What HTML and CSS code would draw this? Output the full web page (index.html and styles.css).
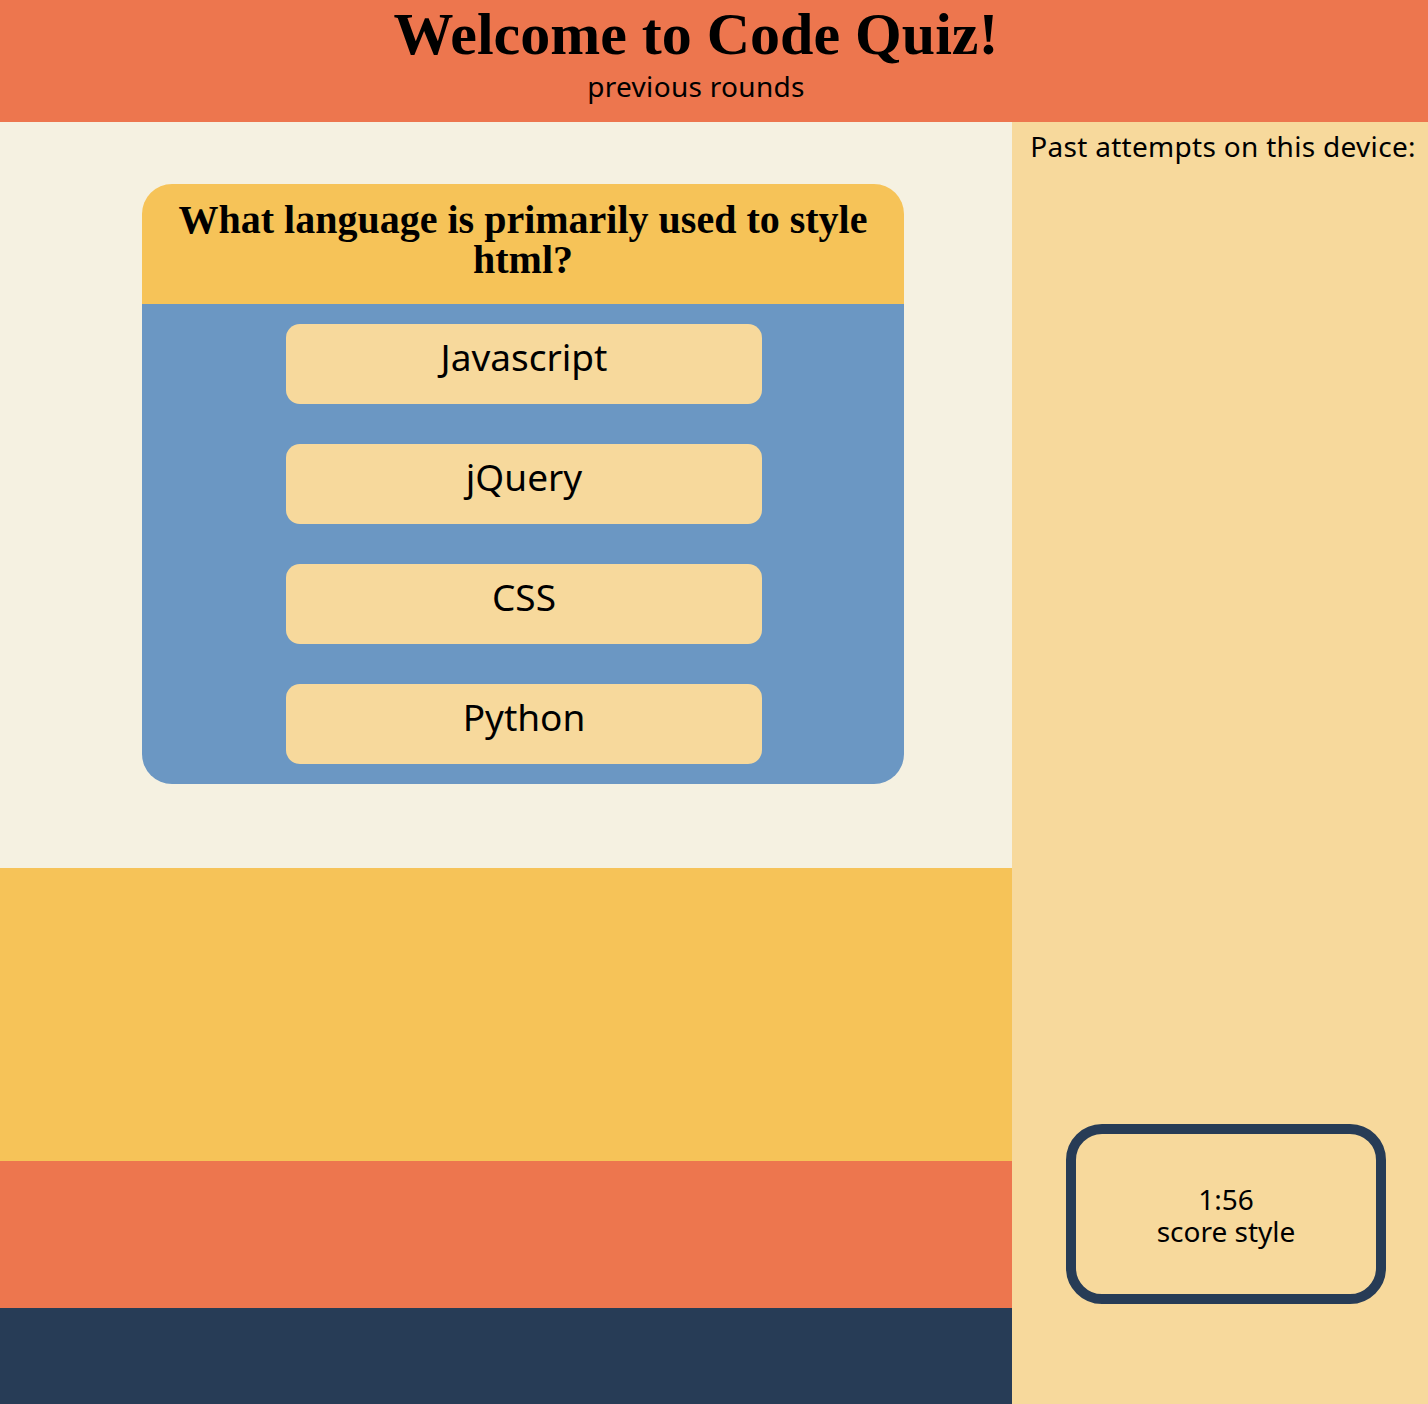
FILE: index.html
```html
<!DOCTYPE html>
<html lang="en">
<head>
<meta charset="utf-8">
<title>Code Quiz</title>
<link rel="stylesheet" href="styles.css">
</head>
<body>
<header class="top">
  <h1 class="title">Welcome to Code Quiz!</h1>
  <div class="subtitle">previous rounds</div>
</header>
<div class="layout">
  <main class="left">
    <section class="stage">
      <div class="card">
        <div class="card-head">
          <h2 class="question">What language is primarily used to style html?</h2>
        </div>
        <div class="card-body">
          <button class="answer">Javascript</button>
          <button class="answer">jQuery</button>
          <button class="answer">CSS</button>
          <button class="answer">Python</button>
        </div>
      </div>
    </section>
    <section class="band band-yellow"></section>
    <section class="band band-orange"></section>
    <section class="band band-navy"></section>
  </main>
  <aside class="side">
    <div class="side-title">Past attempts on this device:</div>
    <div class="score-box">
      <div class="score-line">1:56</div>
      <div class="score-line">score style</div>
    </div>
  </aside>
</div>
</body>
</html>
```
FILE: styles.css
```css
* { box-sizing: border-box; }
html, body { margin: 0; padding: 0; }
body {
  width: 1428px;
  height: 1404px;
  overflow: hidden;
  font-family: "Noto Sans", "Liberation Sans", sans-serif;
  color: #000;
  background: #f7d99c;
}
.top {
  height: 122px;
  background: #ed764e;
  text-align: center;
  padding: 2px 36px 0 0;
}
.title {
  margin: 0;
  font-family: "Liberation Serif", serif;
  font-weight: bold;
  font-size: 60px;
  line-height: 64px;
}
.subtitle {
  font-size: 28px;
  letter-spacing: 0.3px;
  line-height: 34px;
  margin-top: 3px;
}
.layout {
  display: flex;
  height: 1282px;
}
.left {
  width: 1012px;
  display: flex;
  flex-direction: column;
}
.stage {
  height: 746px;
  background: #f5f1e1;
  padding: 62px 0 0 142px;
}
.card {
  width: 762px;
  border-radius: 30px;
  overflow: hidden;
}
.card-head {
  background: #f6c358;
  height: 120px;
  display: flex;
  align-items: center;
  justify-content: center;
  padding: 0 24px 8px;
}
.question {
  margin: 0;
  text-align: center;
  font-family: "Liberation Serif", serif;
  font-weight: bold;
  font-size: 40px;
  line-height: 40px;
}
.card-body {
  background: #6b97c3;
  padding: 20px 0;
  display: flex;
  flex-direction: column;
  align-items: center;
  gap: 40px;
}
.answer {
  width: 476px;
  height: 80px;
  margin-left: 2px;
  border: none;
  border-radius: 14px;
  background: #f7d99c;
  font-family: "Noto Sans", "Liberation Sans", sans-serif;
  font-size: 37px;
  color: #000;
  padding: 0 0 16px;
}
.band-yellow { height: 293px; background: #f6c358; }
.band-orange { height: 147px; background: #ed764e; }
.band-navy { height: 96px; background: #273c56; }
.side {
  width: 416px;
  background: #f7d99c;
  display: flex;
  flex-direction: column;
  align-items: center;
}
.side-title {
  font-size: 28px;
  letter-spacing: 0.3px;
  line-height: 36px;
  margin-top: 6px;
  padding-left: 6px;
}
.score-box {
  margin-top: auto;
  margin-bottom: 100px;
  margin-left: 12px;
  width: 320px;
  height: 180px;
  border: 10px solid #273c56;
  border-radius: 36px;
  display: flex;
  flex-direction: column;
  align-items: center;
  justify-content: center;
  font-size: 28px;
  padding-top: 2px;
}
.score-line {
  line-height: 32px;
  height: 32px;
}
```
